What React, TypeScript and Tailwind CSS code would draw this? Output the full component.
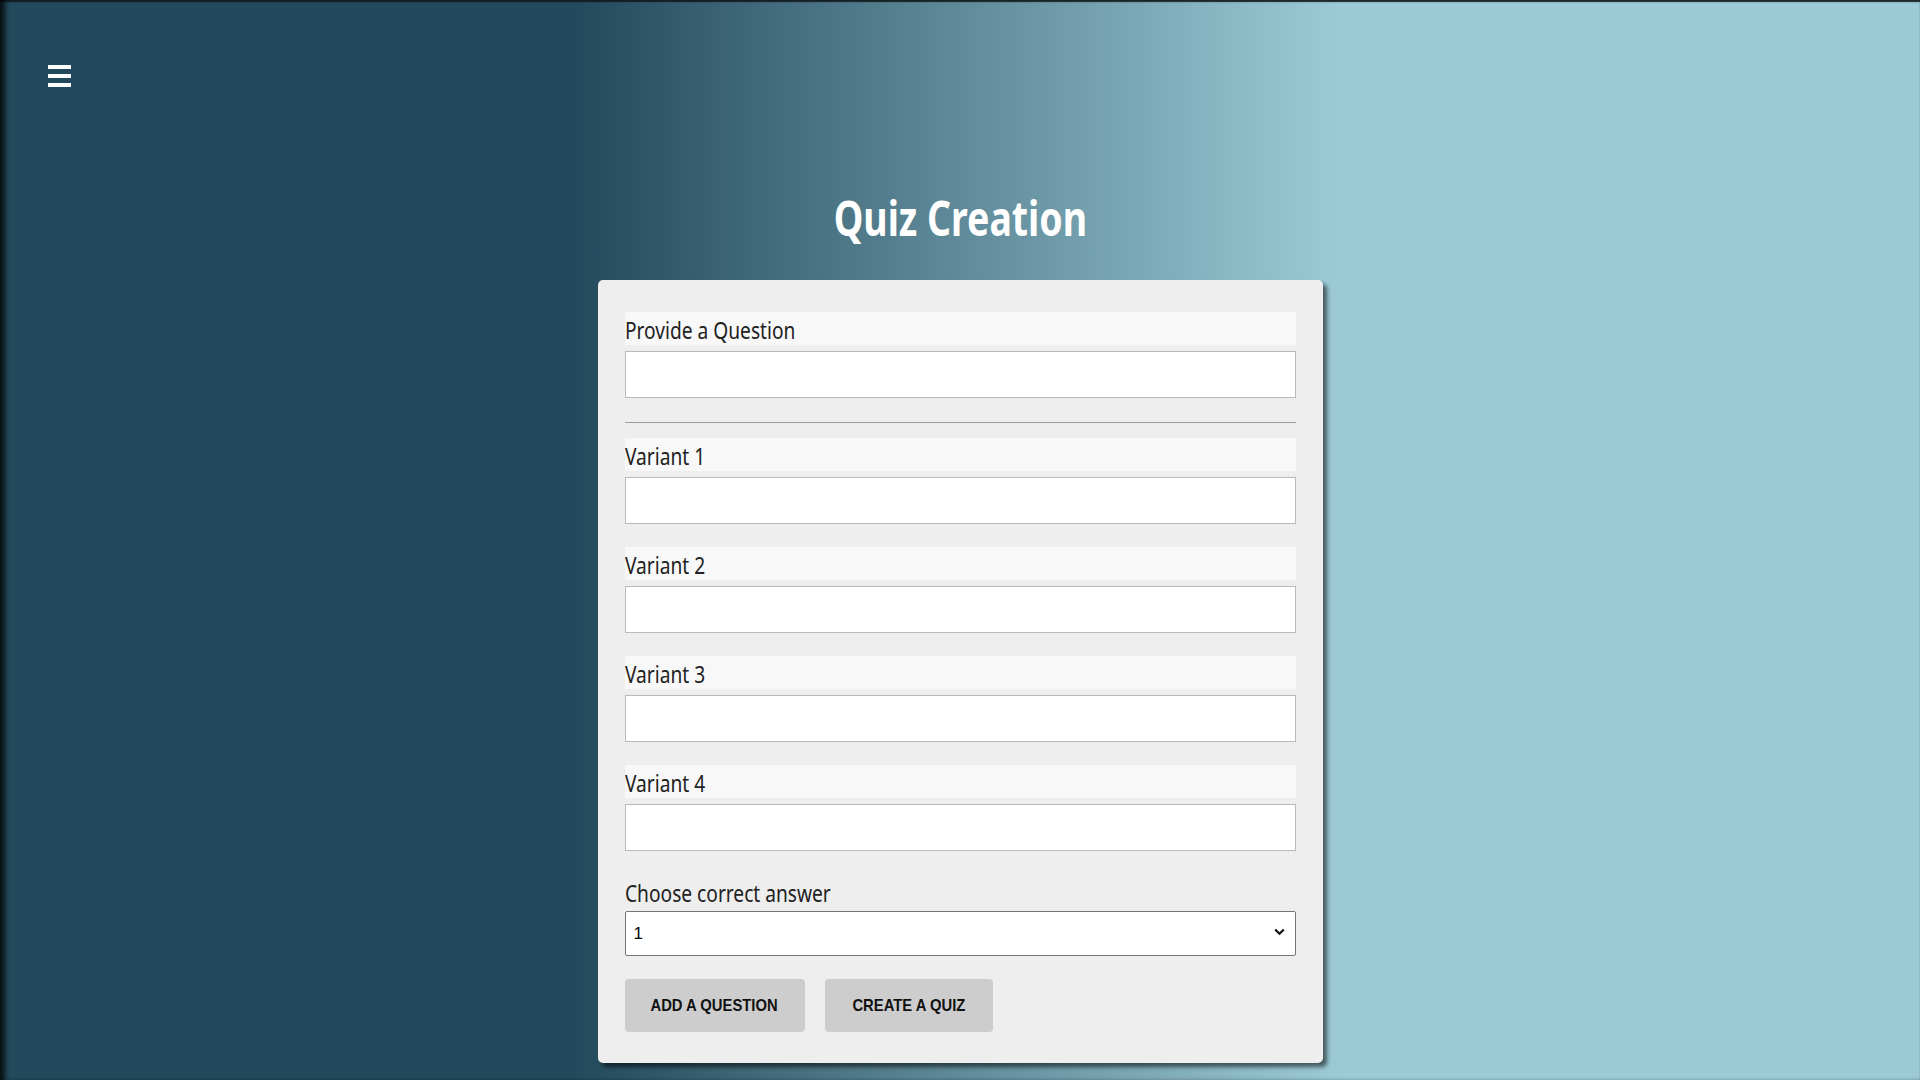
import React from "react";

const labelFont = { fontFamily: '"Noto Sans", "Open Sans", sans-serif' };

function Field({ label }: { label: string }) {
  return (
    <div className="flex flex-col">
      <label
        className="block h-[33px] bg-[#f8f8f8] text-[23px] leading-[36px] text-[#222222]"
        style={labelFont}
      >
        <span className="inline-block origin-left scale-x-[0.833] whitespace-nowrap">{label}</span>
      </label>
      <input
        type="text"
        className="mt-[6px] block h-[47px] w-full border border-[#bababa] bg-white outline-none"
      />
    </div>
  );
}

export default function App() {
  return (
    <div className="relative min-h-screen w-full overflow-hidden bg-[linear-gradient(to_right,#234a5c_30%,#9ccbd7_70%)]">
      <div className="pointer-events-none absolute inset-0 shadow-[inset_7px_0_5px_-2px_rgba(0,0,0,0.75),inset_0_2px_1px_0_rgba(20,28,32,0.9)]" />
      <div className="pl-[48px] pt-[65px]">
        <button className="flex w-[23px] flex-col gap-[5px]" aria-label="menu">
          <span className="block h-[4px] w-[23px] bg-white" />
          <span className="block h-[4px] w-[23px] bg-white" />
          <span className="block h-[4px] w-[23px] bg-white" />
        </button>
      </div>
      <h1
        className="mt-[107px] text-center text-[48px] leading-[48px] font-bold text-white"
        style={labelFont}
      >
        <span className="inline-block scale-x-[0.78] whitespace-nowrap">Quiz Creation</span>
      </h1>
      <div className="relative mx-auto mt-[38px] w-[725px] rounded-[5px] bg-[#eeeeee] px-[27px] pt-[32px] pb-[31px] shadow-[4px_4px_4px_rgba(0,0,0,0.55)]">
        <Field label="Provide a Question" />
        <div className="mt-[24px] mb-[15px] h-px w-full bg-[#9c9c9c]" />
        <div className="flex flex-col gap-[23px]">
          <Field label="Variant 1" />
          <Field label="Variant 2" />
          <Field label="Variant 3" />
          <Field label="Variant 4" />
        </div>
        <div className="mt-[24px] flex flex-col">
          <label
            className="block h-[33px] text-[23px] leading-[36px] text-[#222222]"
            style={labelFont}
          >
            <span className="inline-block origin-left scale-x-[0.833] whitespace-nowrap">
              Choose correct answer
            </span>
          </label>
          <div className="relative mt-[3px] h-[45px]">
            <select
              defaultValue="1"
              className="block h-[45px] w-full appearance-none rounded-[2px] border border-[#767676] bg-white pl-[8px] text-[17px] text-black outline-none"
              style={{ fontFamily: '"Liberation Sans", Arial, sans-serif' }}
            >
              <option value="1">1</option>
              <option value="2">2</option>
              <option value="3">3</option>
              <option value="4">4</option>
            </select>
            <svg
              className="pointer-events-none absolute right-[11px] top-[17px]"
              width="11"
              height="8"
              viewBox="0 0 11 8"
            >
              <path d="M1.2 1.5 L5.5 5.8 L9.8 1.5" fill="none" stroke="#111" strokeWidth="2.2" />
            </svg>
          </div>
        </div>
        <div
          className="mt-[23px] flex gap-[20px]"
          style={{ fontFamily: '"Liberation Sans", Arial, sans-serif' }}
        >
          <button className="flex h-[53px] w-[180px] items-center justify-center rounded-[4px] bg-[#cdcdcd] text-[17px] font-bold text-[#111]">
            <span className="inline-block scale-x-[0.87] whitespace-nowrap">ADD A QUESTION</span>
          </button>
          <button className="flex h-[53px] w-[168px] items-center justify-center rounded-[4px] bg-[#cdcdcd] text-[17px] font-bold text-[#111]">
            <span className="inline-block scale-x-[0.87] whitespace-nowrap">CREATE A QUIZ</span>
          </button>
        </div>
      </div>
    </div>
  );
}
